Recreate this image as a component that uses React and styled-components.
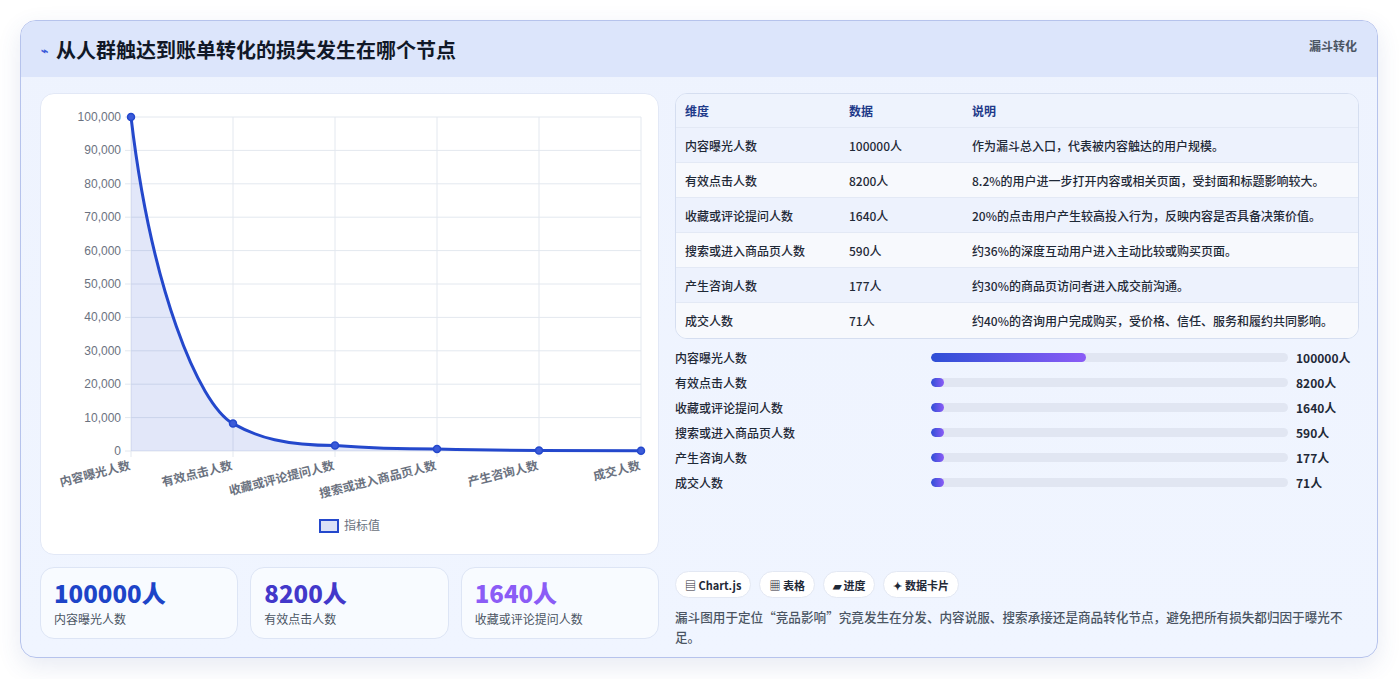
import React from "react";
import styled, { createGlobalStyle } from "styled-components";

const G = createGlobalStyle`
  body{margin:0;background:#fff;font-family:"Noto Sans CJK SC","Noto Sans",sans-serif;}
  *{box-sizing:border-box;}
`;
const Page = styled.div`padding:20px 21px 21px 20px;`;
const Card = styled.div`
  border:1px solid #b6c3ec;border-radius:16px;overflow:hidden;
  background:linear-gradient(180deg,#eef3fe 0%,#f0f5ff 100%);
  box-shadow:0 8px 24px rgba(60,80,160,0.12);height:638px;
`;
const Header = styled.div`
  height:56px;background:#dce5fb;display:flex;align-items:center;justify-content:space-between;
  padding:0 20px 0 20px;
`;
const Title = styled.h1`margin:0;font-size:20px;font-weight:700;color:#111827;display:flex;align-items:center;gap:8px;`;
const Spark = styled.span`color:#3b5bd9;font-size:12px;`;
const Tag = styled.span`font-size:12px;font-weight:700;color:#4b5563;align-self:flex-start;margin-top:16px;`;
const Body = styled.div`display:grid;grid-template-columns:619px 1fr;gap:16px;padding:16px 18px 0 19px;`;
const Col = styled.div`display:flex;flex-direction:column;gap:12px;`;
const ChartCard = styled.div`background:#fff;border:1px solid #e2e8f6;border-radius:14px;height:462px;`;
const Stats = styled.div`display:grid;grid-template-columns:repeat(3,1fr);gap:12px;`;
const Stat = styled.div`background:#f8fbff;border:1px solid #dde5f5;border-radius:14px;height:72px;padding:10px 13px;`;
const StatV = styled.div`font-size:24px;font-weight:800;color:${p=>p.c};line-height:30px;`;
const StatL = styled.div`font-size:12px;color:#4b5563;margin-top:2px;`;
const Table = styled.div`border:1px solid #d5def0;border-radius:12px;overflow:hidden;background:#f4f7fe;`;
const Row = styled.div`display:grid;grid-template-columns:164px 123px 1fr;height:${p=>p.h}px;align-items:center;padding-left:9px;
  font-size:12px;color:${p=>p.head?"#1e3a8a":"#1f2937"};font-weight:${p=>p.head?700:500};
  background:${p=>p.head?"#eef3fd":p.alt?"#f7f9fd":"#edf2fd"};border-bottom:${p=>p.last?"none":"1px solid #e3e9f5"};`;
const Bars = styled.div`display:flex;flex-direction:column;gap:7px;margin-top:-3px;`;
const BarRow = styled.div`display:grid;grid-template-columns:256px 357px 1fr;align-items:center;height:18px;font-size:12px;color:#1f2937;font-weight:500;`;
const Track = styled.div`height:9px;border-radius:5px;background:#e1e6f2;overflow:hidden;`;
const Fill = styled.div`height:100%;border-radius:5px;background:linear-gradient(90deg,#2f4fd6,#8b5cf6);`;
const Val = styled.span`padding-left:8px;font-weight:700;`;
const Chips = styled.div`display:flex;gap:8px;margin-top:68px;`;
const Chip = styled.span`background:#fff;border:1px solid #e3e8f3;border-radius:14px;height:27px;padding:0 9px;display:flex;align-items:center;gap:4px;font-size:11px;font-weight:700;color:#1f2937;`;
const Note = styled.p`margin:9px 0 0;font-size:12.6px;line-height:20px;color:#4b5563;font-weight:500;`;

const rows=[["内容曝光人数","100000人","作为漏斗总入口，代表被内容触达的用户规模。"],["有效点击人数","8200人","8.2%的用户进一步打开内容或相关页面，受封面和标题影响较大。"],["收藏或评论提问人数","1640人","20%的点击用户产生较高投入行为，反映内容是否具备决策价值。"],["搜索或进入商品页人数","590人","约36%的深度互动用户进入主动比较或购买页面。"],["产生咨询人数","177人","约30%的商品页访问者进入成交前沟通。"],["成交人数","71人","约40%的咨询用户完成购买，受价格、信任、服务和履约共同影响。"]];
const barW=[155,13,13,13,13,13];

function Chart(){
  const L=90,R=600,T=23,B=357;const xs=[0,1,2,3,4,5].map(i=>L+i*102);
  const vals=[100000,8200,1640,590,177,71];const ys=vals.map(v=>B-v/100000*(B-T));
  const line=`M${xs[0]},${ys[0]} C${xs[0]+20},${ys[0]+170} ${xs[1]-35},${ys[1]-20} ${xs[1]},${ys[1]} C${xs[1]+25},${ys[1]+14} ${xs[2]-50},${ys[2]} ${xs[2]},${ys[2]} C${xs[2]+40},${ys[2]+3} ${xs[3]-40},${ys[3]} ${xs[3]},${ys[3]} C${xs[3]+40},${ys[3]+1} ${xs[4]-40},${ys[4]} ${xs[4]},${ys[4]} L${xs[5]},${ys[5]}`;
  const labels=["内容曝光人数","有效点击人数","收藏或评论提问人数","搜索或进入商品页人数","产生咨询人数","成交人数"];
  return <svg width="617" height="460" style={{display:"block"}} fontFamily="Liberation Sans, Noto Sans CJK SC, sans-serif">
    {Array.from({length:11}).map((_,i)=>{const y=T+i*(B-T)/10;return <g key={i}><line x1={L-6} x2={R} y1={y} y2={y} stroke="#e3e8ef"/><text x={L-10} y={y+4} fontSize="12" fill="#6b7280" textAnchor="end">{(100000-i*10000).toLocaleString("en-US")}</text></g>})}
    {xs.map((x,i)=><line key={i} x1={x} x2={x} y1={T} y2={B+6} stroke="#e3e8ef"/>)}
    <path d={line+` L${R},${B} L${L},${B} Z`} fill="rgba(59,91,217,0.15)"/>
    <path d={line} fill="none" stroke="#2448cc" strokeWidth="3"/>
    {xs.map((x,i)=><circle key={i} cx={x} cy={ys[i]} r="3.5" fill="#3b5bd9" stroke="#2448cc" strokeWidth="1.5"/>)}
    {xs.map((x,i)=><text key={i} transform={`translate(${x},${B+18}) rotate(-14)`} fontSize="12" fill="#6b7280" fontWeight="600" textAnchor="end" fontFamily="Noto Sans CJK SC, sans-serif">{labels[i]}</text>)}
    <rect x="279" y="426" width="18" height="12" fill="#dbe2f7" stroke="#2448cc" strokeWidth="2"/>
    <text x="303" y="436" fontSize="12" fill="#6b7280" fontFamily="Noto Sans CJK SC, sans-serif">指标值</text>
  </svg>;
}

export default function App(){
  return <Page><G/><Card>
    <Header><Title><Spark>⌁</Spark>从人群触达到账单转化的损失发生在哪个节点</Title><Tag>漏斗转化</Tag></Header>
    <Body>
      <Col>
        <ChartCard><Chart/></ChartCard>
        <Stats>
          <Stat><StatV c="#1d44c8">100000人</StatV><StatL>内容曝光人数</StatL></Stat>
          <Stat><StatV c="#4338ca">8200人</StatV><StatL>有效点击人数</StatL></Stat>
          <Stat><StatV c="#8b5cf6">1640人</StatV><StatL>收藏或评论提问人数</StatL></Stat>
        </Stats>
      </Col>
      <Col>
        <Table>
          <Row head h={34}><span>维度</span><span>数据</span><span>说明</span></Row>
          {rows.map((r,i)=><Row key={i} h={35} alt={i%2===1} last={i===5}><span>{r[0]}</span><span>{r[1]}</span><span>{r[2]}</span></Row>)}
        </Table>
        <Bars>
          {rows.map((r,i)=><BarRow key={i}><span>{r[0]}</span><Track><Fill style={{width:barW[i]}}/></Track><Val>{r[1]}</Val></BarRow>)}
        </Bars>
        <div>
          <Chips><Chip>▤ Chart.js</Chip><Chip>▦ 表格</Chip><Chip>▰ 进度</Chip><Chip>✦ 数据卡片</Chip></Chips>
          <Note>漏斗图用于定位“竞品影响”究竟发生在分发、内容说服、搜索承接还是商品转化节点，避免把所有损失都归因于曝光不足。</Note>
        </div>
      </Col>
    </Body>
  </Card></Page>;
}
